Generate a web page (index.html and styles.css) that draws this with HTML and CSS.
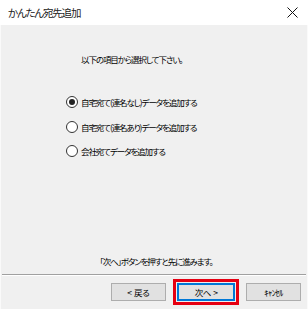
FILE: index.html
```html
<!DOCTYPE html>
<html lang="ja">
<head>
    <meta charset="UTF-8">
    <title>かんたん宛先追加</title>
    <link rel="stylesheet" href="styles.css">
</head>
<body>
    <div class="window">
        <!-- タイトルバー -->
        <div class="titlebar">
            <span class="title">かんたん宛先追加</span>
            <svg class="close" width="11" height="11" viewBox="0 0 11 11">
                <path d="M0.5 0.5 L10.5 10.5 M10.5 0.5 L0.5 10.5" stroke="#111" stroke-width="1" fill="none"/>
            </svg>
        </div>

        <div class="dialog-body">
            <div class="main">
                <p class="lead">以下の項目から選択して下さい。</p>
                <div class="choices">
                    <div class="choice"><span class="radio checked"></span>自宅宛て(連名なし)データを追加する</div>
                    <div class="choice"><span class="radio"></span>自宅宛て(連名あり)データを追加する</div>
                    <div class="choice"><span class="radio"></span>会社宛てデータを追加する</div>
                </div>
            </div>

            <p class="note">「次へ」ボタンを押すと先に進みます。</p>
            <div class="separator"></div>
            <div class="buttons">
                <button class="btn">&lt;&nbsp;&nbsp;戻る</button>
                <span class="mark"><button class="btn default">次へ&nbsp;&nbsp;&gt;</button></span>
                <button class="btn">ｷｬﾝｾﾙ</button>
            </div>
        </div>
    </div>
</body>
</html>
```

FILE: styles.css
```css
* {
    margin: 0;
    padding: 0;
    box-sizing: border-box;
}

html, body {
    width: 308px;
    height: 309px;
    overflow: hidden;
    background: #fff;
}

body {
    font-family: "Noto Sans CJK JP", "Liberation Sans", sans-serif;
    font-feature-settings: "palt";
    color: #000;
}

.window {
    display: flex;
    flex-direction: column;
    height: 309px;
}

.titlebar {
    height: 25px;
    background: #fff;
    display: flex;
    align-items: center;
    justify-content: space-between;
    padding: 0 10px 0 8px;
}

.title {
    font-size: 10.5px;
    letter-spacing: -1.2px;
    color: #222;
}

.dialog-body {
    flex: 1;
    background: #f0f0f0;
    border-left: 1px solid #fafafa;
    border-right: 1px solid #fafafa;
    display: flex;
    flex-direction: column;
}

.main {
    flex: 1;
}

.lead {
    font-size: 8.5px;
    line-height: 10px;
    letter-spacing: -1.1px;
    margin: 29px 0 0 80px;
}

.choices {
    margin: 26px 0 0 65px;
}

.choice {
    height: 24.5px;
    display: flex;
    align-items: center;
    font-size: 8.5px;
    letter-spacing: -1.1px;
}

.radio {
    width: 12px;
    height: 12px;
    border: 1px solid #333;
    border-radius: 50%;
    background: #fff;
    margin-right: 3px;
    display: flex;
    align-items: center;
    justify-content: center;
}

.radio.checked::after {
    content: "";
    width: 6px;
    height: 6px;
    border-radius: 50%;
    background: #222;
}

.note {
    font-size: 8.5px;
    line-height: 12px;
    letter-spacing: -1.1px;
    text-align: center;
    padding-left: 4px;
    margin-bottom: 7px;
}

.separator {
    border-top: 1px solid #a0a0a0;
    border-bottom: 1px solid #fff;
    margin: 0 1px;
}

.buttons {
    display: flex;
    justify-content: flex-end;
    align-items: center;
    gap: 9px;
    padding: 7px 6px 8px 0;
}

.btn {
    width: 55px;
    height: 18px;
    background: #e1e1e1;
    border: 1px solid #adadad;
    font-family: inherit;
    font-size: 8.5px;
    letter-spacing: -0.6px;
    color: #000;
}

.btn.default {
    width: 58px;
    border: 2px solid #0078d7;
}

.mark {
    display: flex;
    outline: 3px solid #e60012;
    outline-offset: 1px;
    margin: 0 2px;
}
```
